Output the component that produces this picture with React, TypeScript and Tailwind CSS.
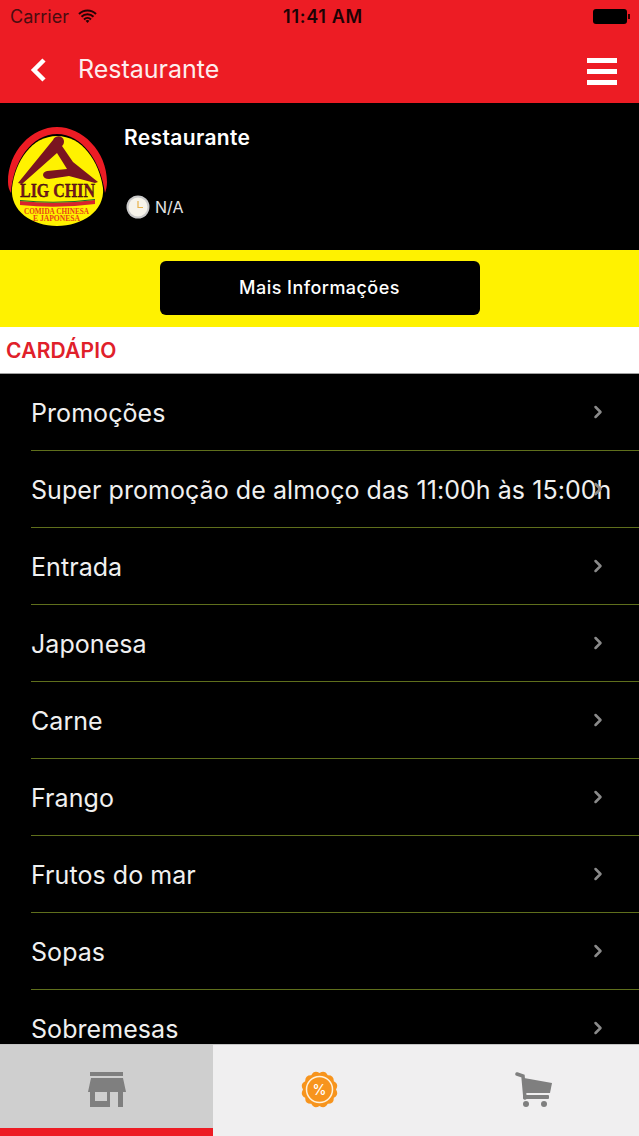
import { ChevronRight } from 'lucide-react';

const MENU_ITEMS = [
  'Promoções',
  'Super promoção de almoço das 11:00h às 15:00h',
  'Entrada',
  'Japonesa',
  'Carne',
  'Frango',
  'Frutos do mar',
  'Sopas',
  'Sobremesas',
];

// scalloped edge of the promo badge
const BADGE_PATH = (() => {
  const bumps = 12;
  let d = '';
  for (let i = 0; i < bumps; i++) {
    const a0 = (i / bumps) * Math.PI * 2;
    const a1 = ((i + 0.5) / bumps) * Math.PI * 2;
    const a2 = ((i + 1) / bumps) * Math.PI * 2;
    const pt = (a: number, r: number) => `${(18 + Math.cos(a) * r).toFixed(2)} ${(18 + Math.sin(a) * r).toFixed(2)}`;
    if (i === 0) d += `M${pt(a0, 16.5)}`;
    d += `Q${pt(a1, 20.5)} ${pt(a2, 16.5)}`;
  }
  return d + 'Z';
})();

function Logo() {
  return (
    <svg width="100" height="100" viewBox="0 0 100 100">
      <path d="M1 56C1 25 25 1 50 1s50 24 50 55c0 4-1 8-2 11C94 35 75 8 50 8S6 35 4 67C2 64 1 60 1 56z" fill="#ed1c24" />
      <path d="M50 10c25 0 42 25 46 52 2 23-21 38-46 38S3 85 5 62C8 35 25 10 50 10z" fill="#fff200" />
      <path
        d="M46 14c2-5 10-5 11 1 0 3-1 4-2 5l11 16 25 20-3 1-26-7-20 3c-7 0-8-7-2-8l20-2-10-16-35 31-4-1z"
        fill="#7a1420"
      />
      <text x="13" y="71" textLength="75" lengthAdjust="spacingAndGlyphs" fontFamily="'Liberation Serif', serif" fontWeight="700" fontSize="18" fill="#7a1420" stroke="#1a0505" strokeWidth="0.3">LIG CHIN</text>
      <path d="M13 75q37 4 75-1v4q-38 5-75 1z" fill="#d8242c" />
      <path d="M13 74q37 4 75-1v1q-38 5-75 1z" fill="#1a6b2c" />
      <text x="17" y="88" textLength="65" lengthAdjust="spacingAndGlyphs" fontFamily="'Liberation Serif', serif" fontWeight="700" fontSize="7.5" fill="#e8401a">COMIDA CHINESA</text>
      <text x="26" y="95" textLength="47" lengthAdjust="spacingAndGlyphs" fontFamily="'Liberation Serif', serif" fontWeight="700" fontSize="7.5" fill="#e8401a">E JAPONESA</text>
    </svg>
  );
}

function ClockIcon() {
  return (
    <svg width="24" height="24" viewBox="0 0 24 24">
      <circle cx="12" cy="12" r="11.5" fill="#c9c9c9" />
      <circle cx="12" cy="12" r="9.5" fill="#f6f3ea" />
      <path d="M12 6v6.5h5" fill="none" stroke="#e8b24a" strokeWidth="1.2" />
    </svg>
  );
}

function StoreIcon() {
  return (
    <svg width="38" height="35" viewBox="0 0 38 35" fill="#7f7f7f">
      <rect x="2" y="0" width="33" height="4" />
      <path d="M3 6h32l3 14H0z" />
      <path d="M2 20h5v9h12v-9h3v15H2z" />
      <rect x="30" y="20" width="5" height="15" />
    </svg>
  );
}

function PromoIcon() {
  return (
    <svg width="37" height="37" viewBox="-0.500 -0.500 37 37">
      <path d={BADGE_PATH} fill="#f7941d" />
      <circle cx="18" cy="18" r="13" fill="none" stroke="#fff2dc" strokeWidth="1.5" />
      <text x="18" y="23" textAnchor="middle" fontFamily="Inter, sans-serif" fontSize="14" fontWeight="500" fill="#fff">%</text>
    </svg>
  );
}

function CartIcon() {
  return (
    <svg width="38" height="36" viewBox="0 0 38 36" fill="#7f7f7f">
      <path d="M2 2l6 2 2 22" fill="none" stroke="#7f7f7f" strokeWidth="3.5" strokeLinecap="round" />
      <path d="M9 6l28 5-2 10H10z" />
      <rect x="8" y="23" width="26" height="4" rx="1" />
      <circle cx="11" cy="32" r="3" />
      <circle cx="29" cy="32" r="3" />
    </svg>
  );
}

export default function App() {
  return (
    <div className="flex h-[1136px] flex-col overflow-hidden bg-black font-['Inter',sans-serif]">
      {/* Status + nav bar */}
      <div className="h-[103px] shrink-0 bg-[#ed1c24]">
        <div className="flex h-[33px] items-center justify-between pl-[10px] pr-[9px] text-black">
          <div className="flex w-[200px] items-center gap-[9px] text-[18px] text-[#4a0c10]">
            Carrier
            <svg width="19" height="14" viewBox="0 0 19 14" className="-mt-[2px]">
              <path d="M1 5a12 12 0 0 1 17 0M3.500 7.800a8.500 8.500 0 0 1 12 0M6 10.500a5 5 0 0 1 7 0" fill="none" stroke="#220305" strokeWidth="2" />
              <path d="M7.500 11.800a3 3 0 0 1 4 0L9.500 14z" fill="#220305" />
            </svg>
          </div>
          <div className="ml-[6px] text-[18px] font-semibold tracking-[0.7px] text-[#1c0304]">11:41 AM</div>
          <div className="flex w-[200px] items-center justify-end">
            <div className="h-[15px] w-[34px] rounded-[3px] bg-black" />
            <div className="ml-[1px] h-[5px] w-[2px] bg-[#330000]" />
          </div>
        </div>
        <div className="flex h-[70px] items-center justify-between pl-[29px] pr-[22px] pt-[4px]">
          <div className="flex items-center gap-[29px]">
            <svg width="20" height="26" viewBox="0 0 20 26">
              <path d="M15 3L5 13l10 10" fill="none" stroke="#fff" strokeWidth="4.500" />
            </svg>
            <span className="text-[25px] text-[#fdeeee]">Restaurante</span>
          </div>
          <div className="mt-[2px] flex w-[30px] flex-col gap-[6px]">
            <div className="h-[5px] bg-white" />
            <div className="h-[5px] bg-white" />
            <div className="h-[5px] bg-white" />
          </div>
        </div>
      </div>

      {/* Restaurant header */}
      <div className="flex h-[147px] shrink-0 bg-black pl-[7px] pt-[23px]">
        <Logo />
        <div className="ml-[17px] flex flex-col">
          <span className="mt-[-2px] text-[21px] font-semibold leading-[28px] tracking-[0.35px] text-white">Restaurante</span>
          <div className="mt-[43px] flex items-center gap-[5px]">
            <div className="ml-[2px]"><ClockIcon /></div>
            <span className="text-[16px] text-[#e4e4e4]">N/A</span>
          </div>
        </div>
      </div>

      {/* Mais informações */}
      <div className="flex h-[77px] shrink-0 items-start justify-center bg-[#fff200] pt-[11px]">
        <button className="h-[54px] w-[320px] rounded-[6px] bg-black pb-[2px] text-[18px] font-medium tracking-[0.45px] text-white">
          Mais Informações
        </button>
      </div>

      <div className="flex h-[47px] shrink-0 items-center border-b border-[#a0a0a0] bg-white pl-[6px] pt-[2px] text-[21px] font-semibold tracking-[0.2px] text-[#e0202a]">
        CARDÁPIO
      </div>

      {/* Menu */}
      <div className="min-h-0 flex-1 overflow-hidden bg-black pl-[31px]">
        {MENU_ITEMS.map((item) => (
          <div key={item} className="flex h-[77px] items-center border-b border-[#5f6f1c] pr-[31px]">
            <span className="min-w-0 flex-1 whitespace-nowrap pt-[3px] text-[25px] tracking-[0.06px] text-[#f0f0f0]">{item}</span>
            <ChevronRight className="h-[20px] w-[20px] shrink-0 text-[#8a8a8a]" strokeWidth={3} />
          </div>
        ))}
      </div>

      {/* Tab bar */}
      <div className="flex h-[92px] shrink-0 border-t border-[#c4c4c4] bg-[#f0eff0]">
        <div className="flex w-[213px] flex-col bg-[#cfcfcf]">
          <div className="flex flex-1 items-center justify-center pt-[5px]"><StoreIcon /></div>
          <div className="h-[8px] bg-[#ed1c24]" />
        </div>
        <div className="flex w-[213px] items-center justify-center pb-[2px]"><PromoIcon /></div>
        <div className="flex w-[213px] items-center justify-center pb-[2px] pl-[3px]"><CartIcon /></div>
      </div>
    </div>
  );
}
